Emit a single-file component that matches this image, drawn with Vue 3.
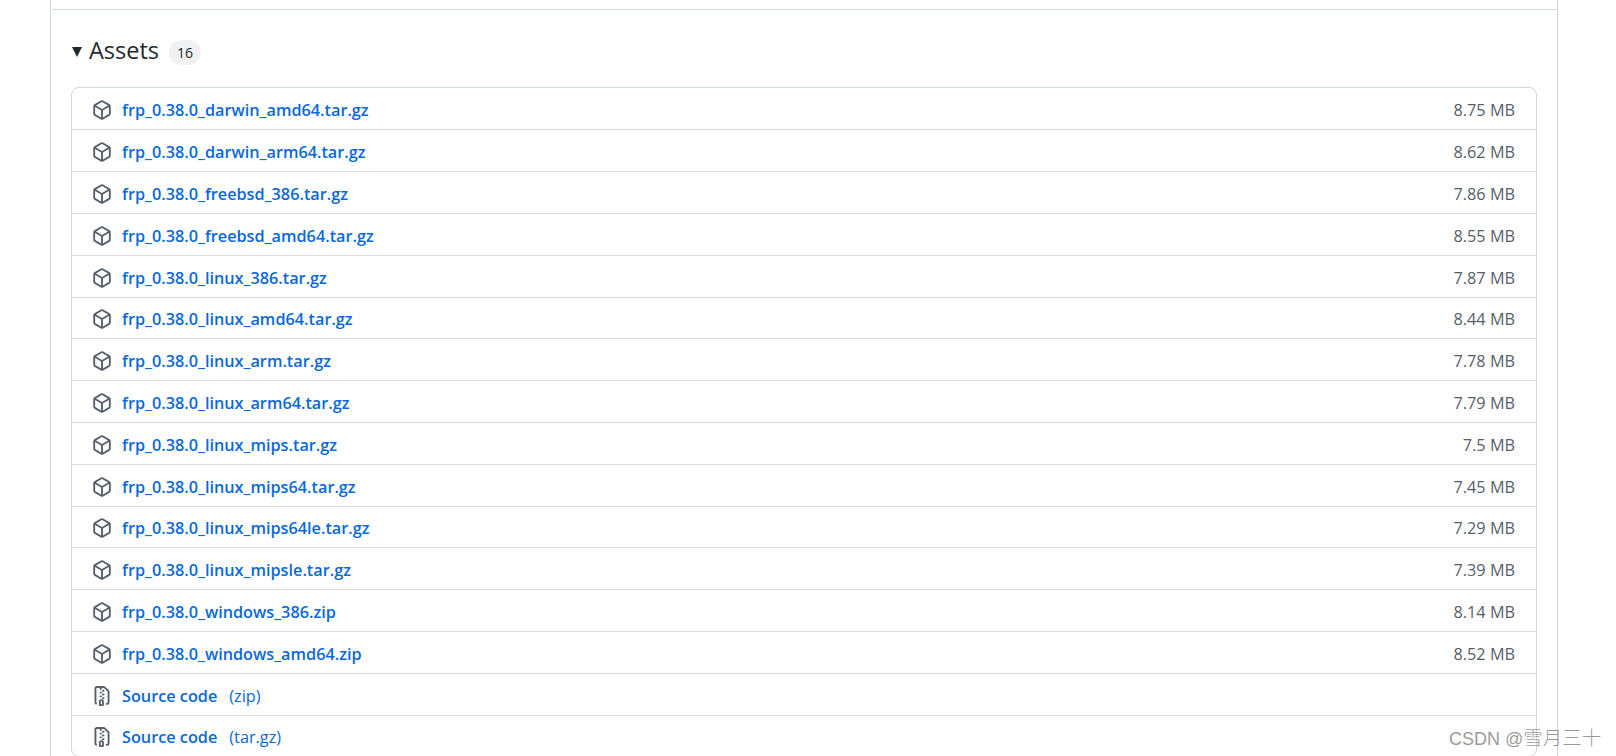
<script setup>
const assets = [
  { name: 'frp_0.38.0_darwin_amd64.tar.gz', size: '8.75 MB' },
  { name: 'frp_0.38.0_darwin_arm64.tar.gz', size: '8.62 MB' },
  { name: 'frp_0.38.0_freebsd_386.tar.gz', size: '7.86 MB' },
  { name: 'frp_0.38.0_freebsd_amd64.tar.gz', size: '8.55 MB' },
  { name: 'frp_0.38.0_linux_386.tar.gz', size: '7.87 MB' },
  { name: 'frp_0.38.0_linux_amd64.tar.gz', size: '8.44 MB' },
  { name: 'frp_0.38.0_linux_arm.tar.gz', size: '7.78 MB' },
  { name: 'frp_0.38.0_linux_arm64.tar.gz', size: '7.79 MB' },
  { name: 'frp_0.38.0_linux_mips.tar.gz', size: '7.5 MB' },
  { name: 'frp_0.38.0_linux_mips64.tar.gz', size: '7.45 MB' },
  { name: 'frp_0.38.0_linux_mips64le.tar.gz', size: '7.29 MB' },
  { name: 'frp_0.38.0_linux_mipsle.tar.gz', size: '7.39 MB' },
  { name: 'frp_0.38.0_windows_386.zip', size: '8.14 MB' },
  { name: 'frp_0.38.0_windows_amd64.zip', size: '8.52 MB' }
];

const sources = ['zip', 'tar.gz'];

const packagePath = 'm8.878.392 5.25 3.045c.54.314.872.89.872 1.514v6.098a1.75 1.75 0 0 1-.872 1.514l-5.25 3.045a1.75 1.75 0 0 1-1.756 0l-5.25-3.045A1.75 1.75 0 0 1 1 11.049V4.951c0-.624.332-1.201.872-1.514L7.122.392a1.75 1.75 0 0 1 1.756 0ZM7.875 1.69l-4.63 2.685L8 7.133l4.755-2.758-4.63-2.685a.248.248 0 0 0-.25 0ZM2.5 5.677v5.372c0 .09.047.171.125.216l4.625 2.683V8.432Zm6.25 8.271 4.625-2.683a.25.25 0 0 0 .125-.216V5.677L8.75 8.432Z';
const zipPath = 'M3.5 1.75v11.5c0 .09.048.173.126.217a.75.75 0 0 1-.752 1.298A1.748 1.748 0 0 1 2 13.25V1.75C2 .784 2.784 0 3.75 0h5.586c.464 0 .909.185 1.237.513l2.914 2.914c.329.328.513.773.513 1.237v8.586A1.75 1.75 0 0 1 12.25 15h-.5a.75.75 0 0 1 0-1.5h.5a.25.25 0 0 0 .25-.25V4.664a.25.25 0 0 0-.073-.177L9.513 1.573a.25.25 0 0 0-.177-.073H7.25a.75.75 0 0 1 0 1.5h-.5a.75.75 0 0 1 0-1.5h-3a.25.25 0 0 0-.25.25Zm3.75 8.75h.5c.966 0 1.75.784 1.75 1.75v3a.75.75 0 0 1-.75.75h-2.5a.75.75 0 0 1-.75-.75v-3c0-.966.784-1.75 1.75-1.75ZM6 5.25a.75.75 0 0 1 .75-.75h.5a.75.75 0 0 1 0 1.5h-.5A.75.75 0 0 1 6 5.25Zm.75 2.25h.5a.75.75 0 0 1 0 1.5h-.5a.75.75 0 0 1 0-1.5ZM8 6.75A.75.75 0 0 1 8.75 6h.5a.75.75 0 0 1 0 1.5h-.5A.75.75 0 0 1 8 6.75ZM8.75 3h.5a.75.75 0 0 1 0 1.5h-.5a.75.75 0 0 1 0-1.5ZM8 9.75A.75.75 0 0 1 8.75 9h.5a.75.75 0 0 1 0 1.5h-.5A.75.75 0 0 1 8 9.75Zm-1 2.5v2.25h1v-2.25a.25.25 0 0 0-.25-.25h-.5a.25.25 0 0 0-.25.25Z';
</script>

<template>
  <div class="page">
    <div class="release">
      <div class="top-rule"></div>
      <div class="assets-head">
        <span class="caret"></span>
        <span class="title">Assets</span>
        <span class="counter">16</span>
      </div>
      <div class="asset-list">
        <div v-for="asset in assets" :key="asset.name" class="asset-row">
          <svg class="icon" viewBox="0 0 16 16" width="20" height="20"><path :d="packagePath" /></svg>
          <a class="asset-name">{{ asset.name }}</a>
          <span class="asset-size">{{ asset.size }}</span>
        </div>
        <div v-for="kind in sources" :key="kind" class="asset-row">
          <svg class="icon" viewBox="0 0 16 16" width="20" height="20"><path :d="zipPath" /></svg>
          <a class="asset-name">Source code</a>
          <span class="asset-kind">({{ kind }})</span>
        </div>
      </div>
    </div>
    <div class="watermark">CSDN @<span class="watermark-cjk">雪月三十</span></div>
  </div>
</template>

<style scoped>
.page {
  position: relative;
  width: 1616px;
  height: 756px;
  overflow: hidden;
  background: #fff;
  font-family: "Open Sans", "Noto Sans", sans-serif;
}

.release {
  box-sizing: border-box;
  width: 1508px;
  height: 756px;
  margin-left: 50px;
  padding-top: 9px;
  border-left: 1px solid #d0d7de;
  border-right: 1px solid #d0d7de;
}

.top-rule {
  height: 1px;
  margin-left: 1px;
  background: #d0d7de;
}

.assets-head {
  display: flex;
  align-items: center;
  height: 77px;
  padding: 4px 0 0 21px;
  box-sizing: border-box;
}

.caret {
  width: 0;
  height: 0;
  margin-top: 3px;
  border-left: 5.5px solid transparent;
  border-right: 5.5px solid transparent;
  border-top: 10px solid #24292f;
}

.title {
  margin-left: 7px;
  margin-top: -2px;
  font-size: 23.5px;
  font-weight: 500;
  line-height: 30px;
  color: #24292f;
}

.counter {
  margin-left: 10px;
  margin-top: 3px;
  width: 32px;
  height: 25px;
  line-height: 25px;
  border-radius: 13px;
  background: #eff1f3;
  text-align: center;
  font-size: 14px;
  color: #24292f;
}

.asset-list {
  box-sizing: border-box;
  width: 1466px;
  margin-left: 20px;
  border: 1px solid #d0d7de;
  border-radius: 8px;
}

.asset-row {
  box-sizing: border-box;
  display: flex;
  align-items: center;
  height: 41.8px;
  padding: 3px 21px 0 20px;
  border-top: 1px solid #d8dee4;
}

.asset-row:first-child {
  height: 41.4px;
  border-top: none;
}

.icon {
  flex: none;
  fill: #57606a;
}

.asset-name {
  margin-left: 10px;
  font-size: 16.25px;
  font-weight: 600;
  color: #0969da;
}

.asset-size {
  margin-left: auto;
  font-size: 16.25px;
  color: #57606a;
}

.asset-kind {
  margin-left: 12px;
  font-size: 16.25px;
  color: #0969da;
}

.watermark {
  position: absolute;
  left: 1449px;
  top: 725px;
  font-family: "Liberation Sans", "Noto Sans CJK SC", sans-serif;
  font-size: 18px;
  line-height: 26px;
  color: rgba(120, 120, 120, 0.75);
  white-space: nowrap;
}

.watermark-cjk {
  font-size: 19.5px;
  font-weight: 300;
}
</style>
